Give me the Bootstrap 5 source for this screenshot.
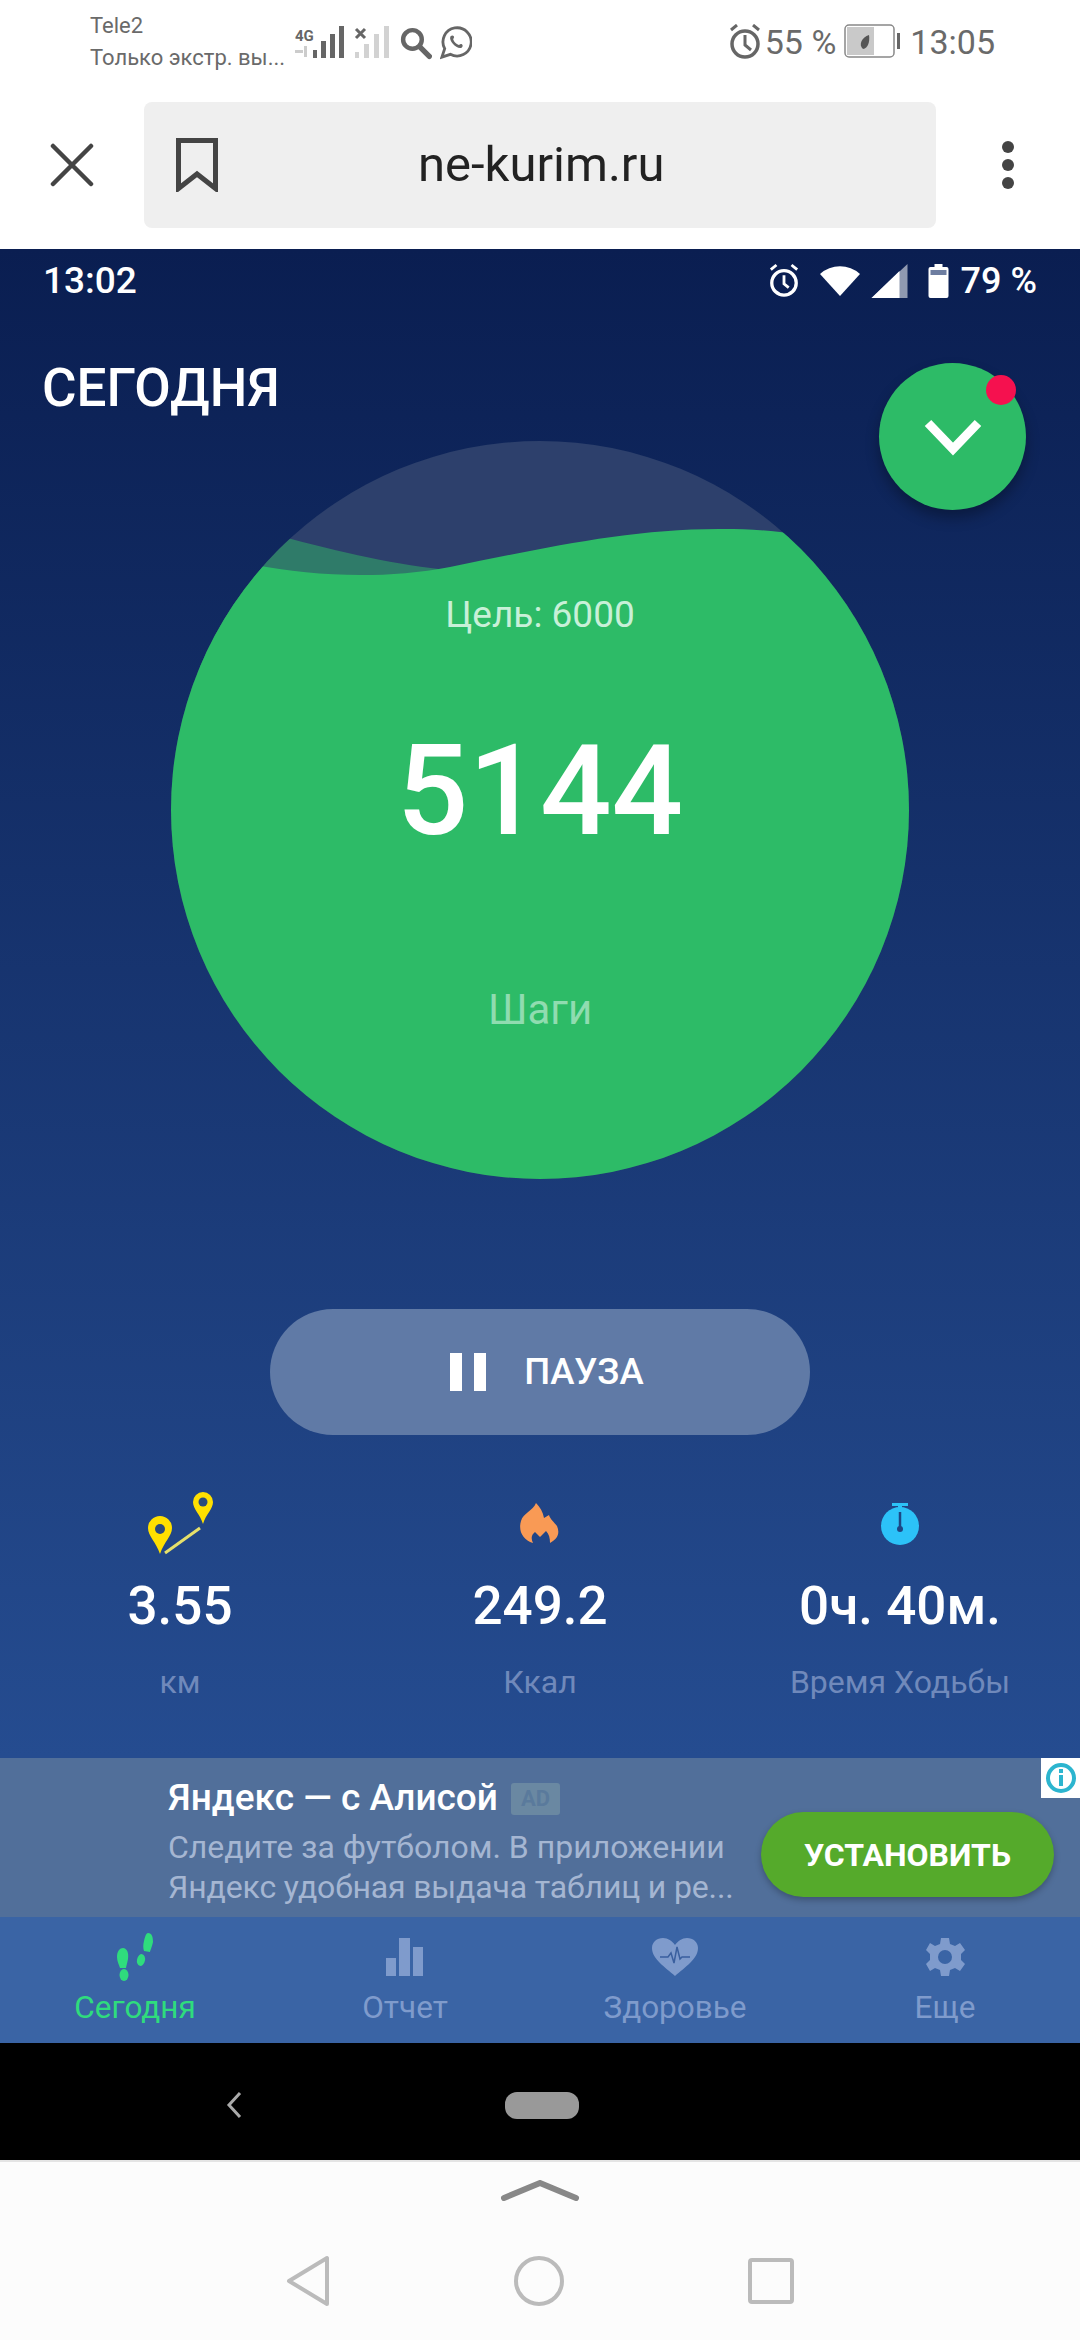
<!DOCTYPE html>
<html lang="ru">
<head>
    <meta charset="UTF-8">
    <meta name="viewport" content="width=device-width, initial-scale=1.0">
    <title>ne-kurim.ru</title>
    <link href="https://cdn.jsdelivr.net/npm/bootstrap@5.3.0/dist/css/bootstrap.min.css" rel="stylesheet">
    <style>
        body {
            margin: 0;
            background: #fff;
            font-family: Roboto, "Liberation Sans", sans-serif;
        }
        svg { display: block; }

        .shell { width: 1080px; height: 2340px; overflow: hidden; }

        /* phone status bar */
        .phone-bar { height: 75px; padding: 10px 85px 0 90px; color: #6a6a6a; }
        .carrier { width: 200px; font-size: 22px; line-height: 32px; white-space: nowrap; }
        .phone-text { font-size: 34px; line-height: 44px; }
        .phone-right { padding-top: 10px; }

        /* browser toolbar */
        .browser-bar { height: 174px; padding: 27px 0 21px; }
        .url-box { width: 792px; height: 126px; background: #efefef; border-radius: 8px; padding-left: 32px; }
        .url-text { font-size: 49px; color: #222; margin-left: 200px; }
        .close-slot { width: 144px; }
        .more-slot { width: 144px; }

        /* app */
        .app-screen {
            height: 1794px;
            background: linear-gradient(180deg, #0a1e51 0%, #254c90 84%);
            color: #fff;
            position: relative;
        }
        .app-status { height: 64px; padding: 0 43px; }
        .app-time { font-size: 37px; font-weight: 500; }
        .app-pct { font-size: 36px; font-weight: 500; margin-left: 12px; }
        .app-title { height: 128px; padding: 45px 42px 0; font-size: 53px; line-height: 60px; font-weight: 500; }
        .fab {
            position: absolute; left: 879px; top: 114px;
            width: 147px; height: 147px; border-radius: 50%;
            background: #2dbb67;
            box-shadow: 0 8px 14px rgba(0, 0, 0, .3);
        }
        .fab-dot {
            position: absolute; left: 107px; top: 12px;
            width: 30px; height: 30px; border-radius: 50%;
            background: #f5114f;
        }
        .ring { width: 738px; height: 738px; position: relative; margin: 0 auto; }
        .ring svg { position: absolute; left: 0; top: 0; }
        .ring-text { position: relative; padding-top: 151px; }
        .goal { font-size: 37px; line-height: 46px; color: #c8f0d8; }
        .steps { font-size: 126px; line-height: 150px; font-weight: 500; margin-top: 78px; }
        .steps-label { font-size: 42px; line-height: 50px; color: #90dcb0; margin-top: 119px; }

        .pause-btn {
            width: 540px; height: 126px; margin: 130px auto 0;
            border-radius: 63px; background: #607aa6; color: #fff;
            font-size: 36.500px; font-weight: 500; border: 0;
            gap: 38px; padding: 0 0 0 14px;
        }
        .stats { margin-top: 55px; }
        .stat-icon { height: 65px; }
        .stat-value { font-size: 53px; line-height: 60px; font-weight: 500; margin-top: 21px; }
        .stat-label { font-size: 32px; line-height: 40px; color: #7089bb; margin-top: 26px; }

        /* ad */
        .ad-band {
            position: absolute; left: 0; top: 1509px;
            width: 1080px; height: 159px; background: #516f9a;
            padding: 17px 26px 0 168px;
        }
        .ad-title { font-size: 37px; line-height: 46px; font-weight: 500; margin-bottom: 6px; white-space: nowrap; }
        .ad-tag {
            display: inline-block; font-size: 22px; line-height: 32px; padding: 0 10px;
            background: #6a88a2; color: #5a7a9c; border-radius: 3px; font-weight: 700;
            margin-left: 13px; vertical-align: 4px;
        }
        .ad-desc { font-size: 32px; line-height: 40px; color: #a5b6d2; white-space: nowrap; }
        .ad-second { letter-spacing: -.15px; }
        .install-btn {
            width: 293px; height: 85px; margin-top: 37px; border-radius: 43px; border: 0;
            background: #55aa2b; color: #fff; font-size: 32px; font-weight: 700; padding: 0;
            box-shadow: 0 3px 6px rgba(0, 0, 0, .25);
        }
        .ad-copy { width: 593px; }
        .ad-info { position: absolute; right: 0; top: 0; width: 39px; height: 40px; background: #fff; }

        /* tabs */
        .tab-row {
            position: absolute; left: 0; top: 1668px;
            width: 1080px; height: 126px; background: #3a64a5;
        }
        .tab-icon { height: 64px; padding-top: 14px; }
        .tab-label { font-size: 31.500px; line-height: 40px; color: #7f9bcc; margin-top: 7px; }
        .tab-on { color: #2fdc7d; }

        /* app nav bar */
        .black-bar { height: 117px; background: #000; padding: 7px 0 0 226px; gap: 263px; }
        .black-pill { width: 74px; height: 27px; background: #999; border-radius: 12px; }

        /* phone nav bar */
        .phone-nav { height: 180px; background: #fcfcfc; border-top: 2px solid #e4e4e4; padding-top: 18px; }
        .phone-keys { gap: 184px; margin-top: 53px; }
    </style>
</head>

<body>
    <div class="shell d-flex flex-column">
        <div class="phone-bar d-flex">
            <div class="carrier">Tele2<br>Только экстр. вы...</div>
            <svg class="ms-1" width="98" height="40" viewBox="0 0 98 40" style="margin-top:14px">
                <text x="1" y="17" font-family="Roboto" font-size="15" font-weight="700" fill="#666">4G</text>
                <g fill="#ccc"><rect x="1" y="26" width="8" height="3"/><rect x="10" y="22" width="3" height="11"/></g>
                <g fill="#666"><rect x="19" y="26" width="4" height="8"/><rect x="27" y="17" width="5" height="17"/><rect x="36" y="10" width="5" height="24"/><rect x="45" y="2" width="5" height="32"/></g>
                <path d="M62 5l9 9m0-9l-9 9" stroke="#666" stroke-width="3"/>
                <g fill="#d2d2d2"><rect x="61" y="28" width="4" height="6"/><rect x="70" y="20" width="5" height="14"/><rect x="80" y="10" width="5" height="24"/><rect x="90" y="2" width="5" height="32"/></g>
            </svg>
            <svg class="ms-2" width="32" height="36" viewBox="0 0 36 36" style="margin-top:15px">
                <circle cx="14" cy="14" r="10.500" fill="none" stroke="#666" stroke-width="5"/>
                <path d="M22 22l11 11" stroke="#666" stroke-width="6" stroke-linecap="round"/>
            </svg>
            <svg class="ms-2" width="32" height="36" viewBox="0 0 34 36" style="margin-top:15px">
                <path d="M2 33l3-9a15 15 0 1 1 6 6z" fill="none" stroke="#666" stroke-width="3"/>
                <path d="M11 11c2-2 4-1 4 1l-1 2c1 3 3 5 6 6l2-1c2 0 3 2 1 4-5 2-14-7-12-12z" fill="#666"/>
            </svg>
            <div class="ms-auto d-flex align-items-start phone-right">
                <svg width="32" height="36" viewBox="0 0 32 36" class="me-1 mt-1">
                    <circle cx="16" cy="20" r="13" fill="none" stroke="#666" stroke-width="3.500"/>
                    <path d="M16 11v10l6 5" fill="none" stroke="#666" stroke-width="3"/>
                    <path d="M2 6l6-5m22 5l-6-5" stroke="#666" stroke-width="3"/>
                </svg>
                <div class="phone-text">55 %</div>
                <svg width="58" height="34" viewBox="0 0 58 34" class="ms-2 mt-1">
                    <rect x="1" y="1" width="49" height="32" rx="4" fill="#fff" stroke="#888" stroke-width="1.500"/>
                    <rect x="3" y="3" width="27" height="28" fill="#c9c9c9"/>
                    <path d="M19 25c-5-4-1-12 6-14 1 7-1 13-6 14z" fill="#555"/>
                    <rect x="53" y="9" width="3" height="16" fill="#666"/>
                </svg>
                <div class="phone-text ms-2">13:05</div>
            </div>
        </div>

        <div class="browser-bar d-flex align-items-center">
            <div class="close-slot d-flex justify-content-center">
                <svg width="44" height="44" viewBox="0 0 44 44"><path d="M3 3l38 38M41 3L3 41" stroke="#444" stroke-width="4.500" stroke-linecap="round"/></svg>
            </div>
            <div class="url-box d-flex align-items-center">
                <svg width="42" height="54" viewBox="0 0 42 54"><path d="M2.500 2.500h37v48L21 36 2.500 50.500z" fill="none" stroke="#444" stroke-width="5"/></svg>
                <div class="url-text">ne-kurim.ru</div>
            </div>
            <div class="more-slot d-flex justify-content-center">
                <svg width="14" height="50" viewBox="0 0 14 50"><circle cx="7" cy="7" r="6" fill="#444"/><circle cx="7" cy="25" r="6" fill="#444"/><circle cx="7" cy="43" r="6" fill="#444"/></svg>
            </div>
        </div>

        <div class="app-screen">
            <div class="app-status d-flex align-items-center">
                <div class="app-time">13:02</div>
                <div class="ms-auto d-flex align-items-center">
                    <svg width="32" height="36" viewBox="0 0 34 36">
                        <circle cx="17" cy="20" r="13" fill="none" stroke="#fff" stroke-width="3.500"/>
                        <path d="M17 12v9l5 4" fill="none" stroke="#fff" stroke-width="3"/>
                        <path d="M3 6l6-5m22 5l-6-5" stroke="#fff" stroke-width="3"/>
                    </svg>
                    <svg style="margin-left:20px" width="40" height="32" viewBox="0 0 40 32"><path d="M20 31L0 9a30 30 0 0 1 40 0z" fill="#fff"/></svg>
                    <svg style="margin-left:11px" width="37" height="34" viewBox="0 0 36 34"><path d="M36 0v34H0z" fill="#fff" opacity=".55"/><path d="M28 7v27H0z" fill="#fff"/></svg>
                    <svg style="margin-left:20px" width="21" height="34" viewBox="0 0 20 34"><path d="M6 0h8v3h4a2 2 0 0 1 2 2v27a2 2 0 0 1-2 2H2a2 2 0 0 1-2-2V5a2 2 0 0 1 2-2h4z" fill="#fff"/><rect x="2" y="6" width="16" height="5" fill="#6d7da0"/></svg>
                    <div class="app-pct">79 %</div>
                </div>
            </div>

            <div class="app-title">СЕГОДНЯ</div>
            <div class="fab d-flex align-items-center justify-content-center">
                <svg width="60" height="40" viewBox="0 0 60 40"><path d="M5 6l25 26L55 6" fill="none" stroke="#fff" stroke-width="9"/></svg>
                <div class="fab-dot"></div>
            </div>

            <div class="ring text-center">
                <svg width="738" height="738" viewBox="171 441 738 738">
                    <defs><clipPath id="disc"><circle cx="540" cy="810" r="369"/></clipPath></defs>
                    <circle cx="540" cy="810" r="369" fill="#2d406c"/>
                    <g clip-path="url(#disc)">
                        <path d="M280 536C340 552 400 566 450 570L450 700L200 700L200 560z" fill="#2f7b69"/>
                        <path d="M200 552C270 572 360 584 450 567C540 549 630 528 725 529C745 529 770 530 800 535L950 535L950 1200L130 1200L130 540z" fill="#2dbb67"/>
                    </g>
                </svg>
                <div class="ring-text">
                    <div class="goal">Цель: 6000</div>
                    <div class="steps">5144</div>
                    <div class="steps-label">Шаги</div>
                </div>
            </div>

            <button class="pause-btn d-flex align-items-center justify-content-center">
                <svg width="36" height="38" viewBox="0 0 36 38"><rect width="12" height="38" fill="#fff"/><rect x="24" width="12" height="38" fill="#fff"/></svg>
                <span>ПАУЗА</span>
            </button>

            <div class="row g-0 stats text-center">
                <div class="col-4">
                    <div class="stat-icon d-flex justify-content-center">
                        <svg width="70" height="65" viewBox="145 1490 70 65">
                            <path d="M160 1554c-4-12-12-18-12-26a12 12 0 0 1 24 0c0 8-8 14-12 26z" fill="#ffe000"/>
                            <circle cx="160" cy="1529" r="5" fill="#2a4a7c"/>
                            <path d="M203 1524c-3-10-10-15-10-22a10 10 0 0 1 20 0c0 7-7 12-10 22z" fill="#ffe000"/>
                            <circle cx="203" cy="1502" r="4.500" fill="#2a4a7c"/>
                            <path d="M165 1553l35-25" stroke="#e6e06a" stroke-width="3"/>
                        </svg>
                    </div>
                    <div class="stat-value">3.55</div>
                    <div class="stat-label">км</div>
                </div>
                <div class="col-4">
                    <div class="stat-icon d-flex justify-content-center">
                        <svg width="42" height="65" viewBox="518 1490 42 65">
                            <path d="M532 1543c-10-3-15-12-12-22 2-8 12-10 15-18 4 4 7 9 8 15l5-3c1 4 5 7 8 11 3 7 1 13-7 17 0-5-1-9-4-12l-6 6-5-5c-4 3-4 7-2 11z" fill="#f99a55"/>
                        </svg>
                    </div>
                    <div class="stat-value">249.2</div>
                    <div class="stat-label">Ккал</div>
                </div>
                <div class="col-4">
                    <div class="stat-icon d-flex justify-content-center">
                        <svg width="40" height="65" viewBox="880 1490 40 65">
                            <circle cx="900" cy="1526" r="19" fill="#2cc2f8"/>
                            <path d="M892 1503h16v3h-6v5h-4v-5h-6z" fill="#2cc2f8"/>
                            <path d="M900 1512v16" stroke="#1d4684" stroke-width="2.500"/>
                            <circle cx="900" cy="1529" r="3" fill="#1d4684"/>
                        </svg>
                    </div>
                    <div class="stat-value">0ч. 40м.</div>
                    <div class="stat-label">Время Ходьбы</div>
                </div>
            </div>

            <div class="ad-band d-flex">
                <div class="ad-copy flex-shrink-0">
                    <div class="ad-title">Яндекс — с Алисой<span class="ad-tag">AD</span></div>
                    <div class="ad-desc">Следите за футболом. В приложении</div>
                    <div class="ad-desc ad-second">Яндекс удобная выдача таблиц и ре...</div>
                </div>
                <button class="install-btn flex-shrink-0">УСТАНОВИТЬ</button>
                <div class="ad-info d-flex align-items-center justify-content-center">
                    <svg width="32" height="32" viewBox="0 0 32 32">
                        <circle cx="16" cy="16" r="13" fill="none" stroke="#2cb5cf" stroke-width="4"/>
                        <rect x="14" y="13" width="4" height="11" fill="#2cb5cf"/><rect x="14" y="7" width="4" height="4" fill="#2cb5cf"/>
                    </svg>
                </div>
            </div>

            <div class="tab-row row g-0 text-center">
                <div class="col-3">
                    <div class="tab-icon d-flex justify-content-center">
                        <svg width="40" height="50" viewBox="116 1930 40 50">
                            <g fill="#2fdc7d">
                                <path d="M124 1947c4 0 6 5 5 11-1 5-2 8-2 9h-6c-1-3-3-7-3-11 0-6 3-9 6-9z"/>
                                <ellipse cx="125" cy="1974" rx="4.500" ry="6"/>
                                <path d="M149 1932c4 0 5 4 5 9-1 5-3 9-3 10l-6-1c-1-3-1-6 0-10s2-8 4-8z"/>
                                <ellipse cx="142" cy="1959" rx="4" ry="6" transform="rotate(12 142 1959)"/>
                            </g>
                        </svg>
                    </div>
                    <div class="tab-label tab-on">Сегодня</div>
                </div>
                <div class="col-3">
                    <div class="tab-icon d-flex justify-content-center">
                        <svg width="38" height="50" viewBox="386 1930 38 50">
                            <g fill="#7f9bcc"><rect x="386" y="1957" width="10" height="18"/><rect x="399" y="1937" width="11" height="38"/><rect x="413" y="1946" width="10" height="29"/></g>
                        </svg>
                    </div>
                    <div class="tab-label">Отчет</div>
                </div>
                <div class="col-3">
                    <div class="tab-icon d-flex justify-content-center">
                        <svg width="46" height="50" viewBox="652 1930 46 50">
                            <path d="M675 1975c-10-9-23-17-23-28 0-6 5-10 11-10 5 0 9 3 12 7 3-4 7-7 12-7 6 0 11 4 11 10 0 11-13 19-23 28z" fill="#7f9bcc"/>
                            <path d="M660 1956h8l3-4 3 10 3-16 3 12 2-2h8" fill="none" stroke="#3a5f9e" stroke-width="1.500"/>
                        </svg>
                    </div>
                    <div class="tab-label">Здоровье</div>
                </div>
                <div class="col-3">
                    <div class="tab-icon d-flex justify-content-center">
                        <svg width="40" height="50" viewBox="925 1930 40 50">
                            <path d="M941 1937h8l1 6 5 2 5-3 5 7-4 4v6l4 4-5 7-5-3-5 2-1 6h-8l-1-6-5-2-5 3-4-7 4-4v-6l-4-4 4-7 5 3 5-2z" fill="#7f9bcc"/>
                            <circle cx="945" cy="1956" r="7" fill="#3a64a5"/>
                        </svg>
                    </div>
                    <div class="tab-label">Еще</div>
                </div>
            </div>
        </div>

        <div class="black-bar d-flex align-items-center">
            <svg width="16" height="28" viewBox="0 0 16 28"><path d="M14 2L3 14l11 12" fill="none" stroke="#aaa" stroke-width="3"/></svg>
            <div class="black-pill"></div>
        </div>

        <div class="phone-nav">
            <div class="d-flex justify-content-center">
                <svg width="80" height="22" viewBox="0 0 80 22"><path d="M4 18L40 3l36 15" fill="none" stroke="#888" stroke-width="6" stroke-linecap="round"/></svg>
            </div>
            <div class="phone-keys d-flex justify-content-center align-items-center">
                <svg width="44" height="52" viewBox="0 0 44 52"><path d="M41 3v46L3 26z" fill="none" stroke="#bbb" stroke-width="4" stroke-linejoin="round"/></svg>
                <svg width="50" height="52" viewBox="0 0 50 52"><circle cx="25" cy="26" r="23" fill="none" stroke="#bbb" stroke-width="4"/></svg>
                <svg width="46" height="46" viewBox="0 0 46 46"><rect x="2" y="2" width="42" height="42" rx="2" fill="none" stroke="#bbb" stroke-width="4"/></svg>
            </div>
        </div>
    </div>

    <script src="https://cdn.jsdelivr.net/npm/bootstrap@5.3.0/dist/js/bootstrap.bundle.min.js"></script>
</body>
</html>
